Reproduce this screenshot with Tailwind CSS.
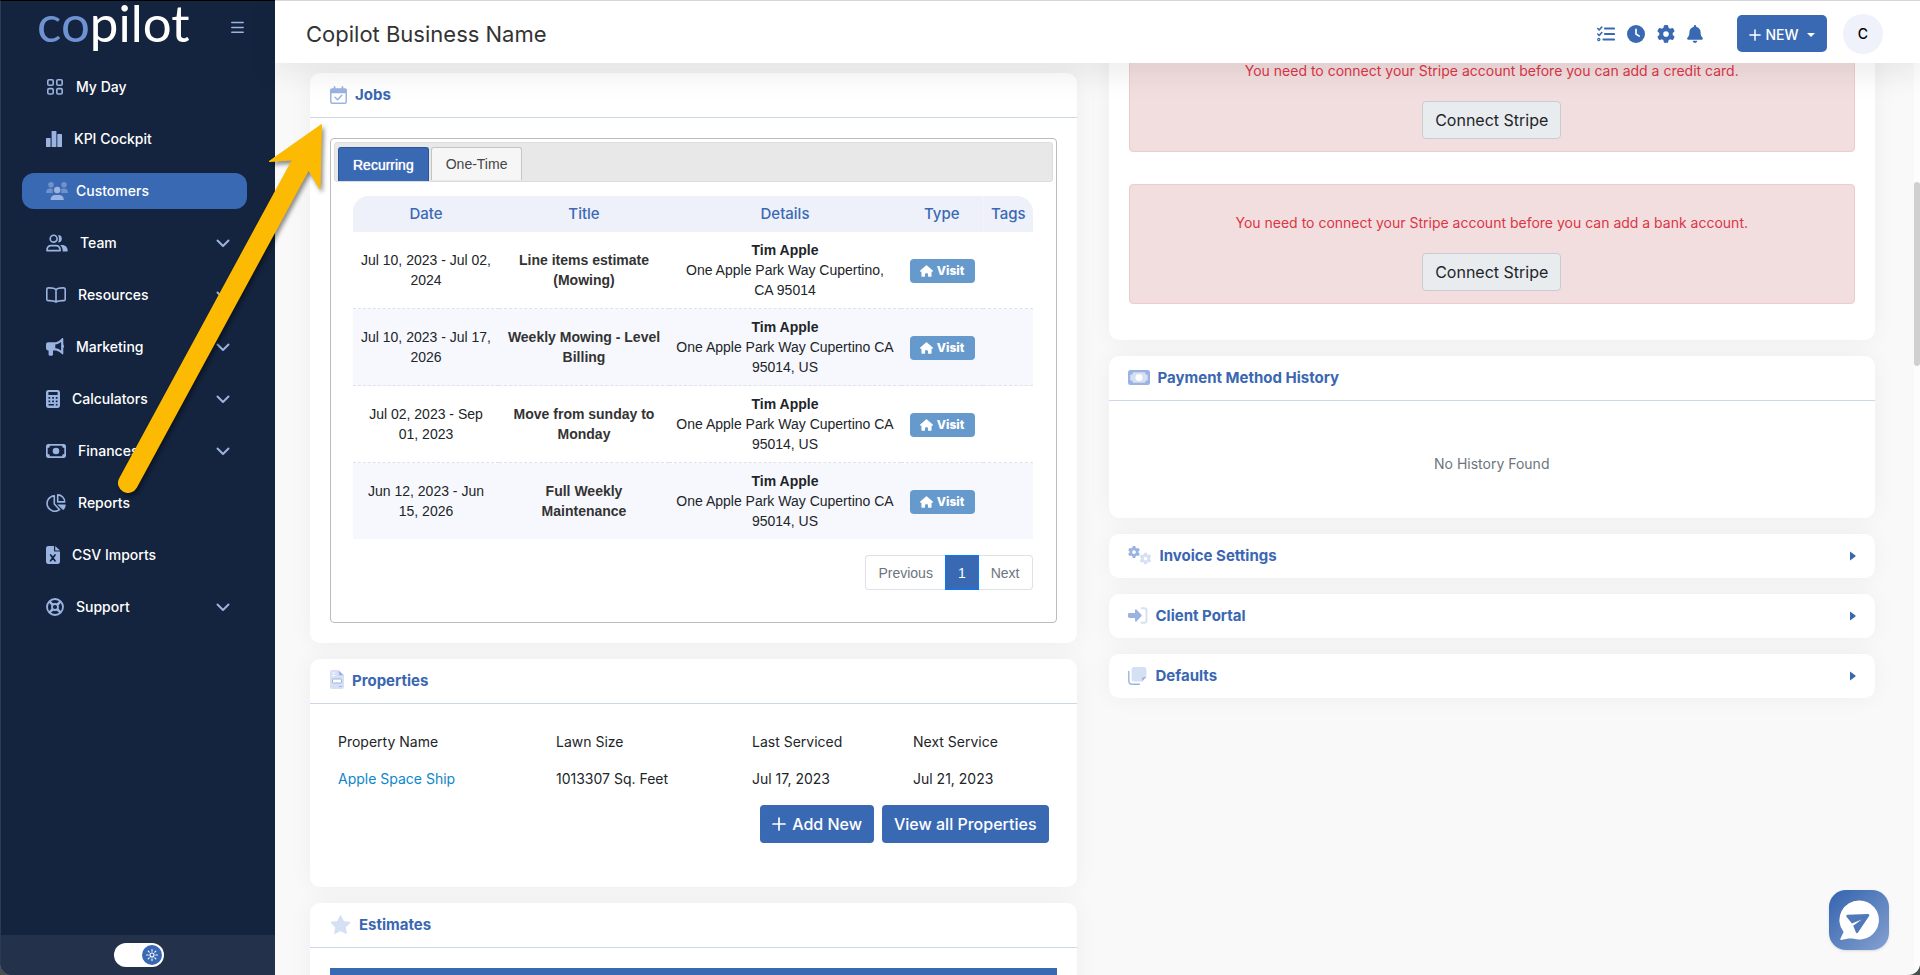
<!DOCTYPE html>
<html lang="en">
	<head>
		<meta charset="UTF-8" />
		<meta name="viewport" content="width=device-width, initial-scale=1.0" />
		<title>Copilot CRM - Customer</title>
		<script src="https://cdn.jsdelivr.net/npm/@tailwindcss/browser@4"></script>
	</head>
	<body class="bg-[#46504f] font-['Inter',sans-serif] text-sm text-[#212529]">
		<!-- Shared icons -->
		<svg class="hidden">
			<symbol id="chevron" viewBox="0 0 14 9">
				<path d="M1.5 1.5 7 7l5.5-5.5" fill="none" stroke="currentColor" stroke-width="2" stroke-linecap="round" stroke-linejoin="round" />
			</symbol>
			<symbol id="plus" viewBox="0 0 14 14">
				<path d="M7 1v12M1 7h12" fill="none" stroke="currentColor" stroke-width="1.7" stroke-linecap="round" />
			</symbol>
			<symbol id="caret" viewBox="0 0 6 10"><path d="M0 .5v9L5.5 5.5v-1z" fill="currentColor" /></symbol>
			<symbol id="gear" viewBox="0 0 512 512">
				<path fill="currentColor" d="M495.9 166.6c3.2 8.7 .5 18.4-6.4 24.6l-43.3 39.4c1.1 8.3 1.7 16.8 1.7 25.4s-.6 17.1-1.7 25.4l43.3 39.4c6.9 6.2 9.6 15.9 6.4 24.6c-4.4 11.9-9.7 23.3-15.8 34.3l-4.7 8.1c-6.6 11-14 21.4-22.1 31.2c-5.9 7.2-15.7 9.6-24.5 6.8l-55.7-17.7c-13.4 10.3-28.2 18.9-44 25.4l-12.5 57.1c-2 9.1-9 16.3-18.2 17.8c-13.8 2.3-28 3.5-42.5 3.5s-28.7-1.2-42.5-3.5c-9.2-1.5-16.2-8.7-18.2-17.8l-12.5-57.1c-15.8-6.5-30.6-15.1-44-25.4L83.1 425.9c-8.8 2.8-18.6 .3-24.5-6.8c-8.1-9.8-15.5-20.2-22.1-31.2l-4.7-8.1c-6.1-11-11.4-22.4-15.8-34.3c-3.2-8.7-.5-18.4 6.4-24.6l43.3-39.4C64.6 273.1 64 264.6 64 256s.6-17.1 1.7-25.4L22.4 191.2c-6.9-6.2-9.6-15.9-6.4-24.6c4.4-11.9 9.7-23.3 15.8-34.3l4.7-8.1c6.6-11 14-21.4 22.1-31.2c5.9-7.2 15.7-9.6 24.5-6.8l55.7 17.7c13.4-10.3 28.2-18.9 44-25.4l12.5-57.1c2-9.1 9-16.3 18.2-17.8C227.3 1.2 241.5 0 256 0s28.7 1.2 42.5 3.5c9.2 1.5 16.2 8.7 18.2 17.8l12.5 57.1c15.8 6.5 30.6 15.1 44 25.4l55.7-17.7c8.8-2.8 18.6-.3 24.5 6.8c8.1 9.8 15.5 20.2 22.1 31.2l4.7 8.1c6.1 11 11.4 22.4 15.8 34.3zM256 336a80 80 0 1 0 0-160 80 80 0 1 0 0 160z" />
			</symbol>
			<symbol id="house" viewBox="0 0 576 512">
				<path fill="currentColor" d="M575.8 255.5c0 18-15 32.1-32 32.1l-32 0 .7 160.2c0 2.7-.2 5.4-.5 8.1l0 16.2c0 22.1-17.9 40-40 40l-80 0c-22.1 0-40-17.9-40-40l0-88c0-17.7-14.3-32-32-32l-64 0c-17.7 0-32 14.3-32 32l0 88c0 22.1-17.9 40-40 40l-80 0c-22.1 0-40-17.9-40-40l0-184.5-32 0c-18 0-32-14-32-32.1c0-9 3-17 10-24L266.4 8c7-7 15-8 22-8s15 2 21 7L564.8 231.500c8 7 12 15 11 24z" />
			</symbol>
		</svg>

		<div class="relative flex h-screen overflow-hidden rounded-b-xl bg-[#f9f9f9]">
			<!-- Sidebar -->
			<aside class="flex w-[275px] shrink-0 flex-col border-t border-l border-t-black border-l-[#2c3b54] bg-[#14243e] font-medium text-white">
				<div class="flex h-[52px] items-center justify-between pr-[31px] pl-9">
					<a href="#" class="pb-2.5 font-['Lato',sans-serif] text-[51px] leading-none font-normal"><span class="text-[#6f92d2]">co</span>pilot</a>
					<button aria-label="Collapse menu" class="text-[#9bb3e0]">
						<svg class="h-3 w-[13px]" viewBox="0 0 13 12" fill="none" stroke="currentColor" stroke-width="1.5" stroke-linecap="round"><path d="M.8 1.5h11.4M.8 6.5h11.4M.8 11.2h11.4" /></svg>
					</button>
				</div>
				<nav class="mt-4 flex flex-1 flex-col gap-4 pr-7 pl-[21px]">
					<a href="#" class="flex h-9 items-center gap-3 rounded-xl px-6">
						<svg class="h-4 w-[18px] text-[#9bb3e0]" viewBox="0 0 18 16" fill="none" stroke="currentColor" stroke-width="1.6"><rect x="1.8" y=".8" width="5.4" height="5.4" rx="1.3" /><rect x="10.8" y=".8" width="5.4" height="5.4" rx="1.3" /><rect x="1.8" y="9.6" width="5.4" height="5.4" rx="1.3" /><rect x="10.8" y="9.6" width="5.4" height="5.4" rx="1.3" /></svg>
						<span>My Day</span>
					</a>
					<a href="#" class="flex h-9 items-center gap-3 rounded-xl px-6">
						<svg class="h-4 w-4 text-[#9bb3e0]" viewBox="0 0 16 16" fill="currentColor"><rect y="7" width="4.6" height="9" rx=".6" /><rect x="5.6" width="4.8" height="16" rx=".6" /><rect x="11.3" y="3" width="4.7" height="13" rx=".6" /></svg>
						<span>KPI Cockpit</span>
					</a>
					<a href="#" class="flex h-9 items-center gap-2 rounded-xl bg-[#3a69b4] px-6">
						<svg class="h-[18px] w-[22px] text-[#9bb3e0]" viewBox="0 0 22 18" fill="currentColor"><g opacity=".55"><circle cx="5" cy="2.8" r="2.8" /><circle cx="18" cy="2.8" r="2.8" /><path d="M0 11c0-3 1.5-4.4 4-4.4 1.5 0 2.3.3 3 1-.6 1.3-.5 2.3-.2 3.4zM22 11c0-3-1.5-4.4-4-4.4-1.5 0-2.3.3-3 1 .6 1.3.5 2.3.2 3.4z" /></g><circle cx="11.2" cy="8" r="3.2" /><path d="M4.6 18c0-3.4 2-5 4.6-5h4c2.6 0 4.6 1.6 4.6 5z" /></svg>
						<span>Customers</span>
					</a>
					<a href="#" class="flex h-9 items-center gap-3 rounded-xl px-6">
						<svg class="h-[18px] w-[22px] text-[#9bb3e0]" viewBox="0 0 23 18" fill="currentColor"><circle cx="8" cy="4.5" r="3.6" fill="none" stroke="currentColor" stroke-width="1.7" /><path d="M1 17c0-3.5 2-5.3 4.6-5.3h4.6c2.6 0 4.6 1.8 4.6 5.3z" fill="none" stroke="currentColor" stroke-width="1.7" stroke-linejoin="round" /><path d="M12.6.6a3.9 3.9 0 1 1 0 7.8c1.2-2.3 1.2-5.5 0-7.8zM14.7 11h2c3.8 0 6 2.3 6 6.2 0 .4-.3.7-.7.7h-4.6c.2-3-.8-5.3-2.7-6.9z" /></svg>
						<span>Team</span>
						<svg class="mr-[-7px] ml-auto h-[9px] w-[14px] text-[#9bb3e0]"><use href="#chevron" /></svg>
					</a>
					<a href="#" class="flex h-9 items-center gap-3 rounded-xl px-6">
						<svg class="h-4 w-5 text-[#9bb3e0]" viewBox="0 0 20 16" fill="none" stroke="currentColor" stroke-width="1.6" stroke-linejoin="round"><path d="M10 2.3C8.5 1.2 5.5.8 2.3.9c-.9 0-1.5.6-1.5 1.4v9.900c0 .8.6 1.4 1.5 1.4 3.2-.1 6.2.3 7.7 1.4 1.5-1.1 4.5-1.5 7.7-1.4.9 0 1.5-.6 1.5-1.4V2.3c0-.8-.6-1.4-1.5-1.4-3.2-.1-6.2.3-7.7 1.4zM10 2.3V15" /></svg>
						<span>Resources</span>
						<svg class="mr-[-7px] ml-auto h-[9px] w-[14px] text-[#9bb3e0]"><use href="#chevron" /></svg>
					</a>
					<a href="#" class="flex h-9 items-center gap-3 rounded-xl px-6">
						<svg class="h-[18px] w-[18px] text-[#9bb3e0]" viewBox="0 0 18 18" fill="currentColor"><path fill-rule="evenodd" d="M16 .3c.6-.6 1.3-.2 1.3.6v5.6c.6.4.7 1 .7 1.7s-.1 1.3-.7 1.7v5.6c0 .8-.7 1.2-1.3.6l-2.5-2c-1.4-1.1-3-1.7-4.8-1.7H7v4.2c0 .7-.4 1.1-1.1 1.1H3.7c-.7 0-1.1-.4-1.1-1.1v-4.2H2.2C1 12.400 0 11.400 0 10.200V6.4c0-1.3 1-2.2 2.2-2.2h6.5c1.8 0 3.4-.6 4.8-1.8zM15.1 4l-.3.3c-1.6 1.2-3.5 2-5.5 2.1v3.9c2 .1 3.9.8 5.5 2.1l.3.2z" /></svg>
						<span>Marketing</span>
						<svg class="mr-[-7px] ml-auto h-[9px] w-[14px] text-[#9bb3e0]"><use href="#chevron" /></svg>
					</a>
					<a href="#" class="flex h-9 items-center gap-3 rounded-xl px-6">
						<svg class="h-[18px] w-[14px] text-[#9bb3e0]" viewBox="0 0 14 18" fill="currentColor"><path fill-rule="evenodd" d="M2.2 0h9.6C13 0 14 1 14 2.2v13.6c0 1.2-1 2.2-2.2 2.2H2.2C1 18 0 17 0 15.8V2.2C0 1 1 0 2.2 0zM2.4 2v3h9.2V2zM2.5 7v1.7h1.7V7zM6.2 7v1.7h1.7V7zM9.8 7v1.7h1.7V7zM2.5 10.5v1.7h1.7v-1.7zM6.2 10.5v1.7h1.7v-1.7zM9.8 10.5v1.7h1.7v-1.7zM2.5 14v1.5h5.4V14zM9.8 14v1.5h1.7V14z" /></svg>
						<span>Calculators</span>
						<svg class="mr-[-7px] ml-auto h-[9px] w-[14px] text-[#9bb3e0]"><use href="#chevron" /></svg>
					</a>
					<a href="#" class="flex h-9 items-center gap-3 rounded-xl px-6">
						<svg class="h-[14px] w-5 text-[#9bb3e0]" viewBox="0 0 20 14" fill="currentColor"><path fill-rule="evenodd" d="M2.2 0h15.6C19 0 20 1 20 2.2v9.6c0 1.2-1 2.2-2.2 2.2H2.2C1 14 0 13 0 11.8V2.2C0 1 1 0 2.2 0zM4 1.7A2.3 2.3 0 0 1 1.7 4v6A2.3 2.3 0 0 1 4 12.3h12a2.3 2.3 0 0 1 2.3-2.3V4A2.3 2.3 0 0 1 16 1.7z" /><circle cx="10" cy="7" r="3.3" /></svg>
						<span>Finances</span>
						<svg class="mr-[-7px] ml-auto h-[9px] w-[14px] text-[#9bb3e0]"><use href="#chevron" /></svg>
					</a>
					<a href="#" class="flex h-9 items-center gap-3 rounded-xl px-6">
						<svg class="h-[18px] w-5 text-[#9bb3e0]" viewBox="0 0 20 18"><g fill="none" stroke="currentColor" stroke-width="1.6" stroke-linejoin="round"><path d="M8.3 1.7a7.8 7.8 0 1 0 5.3 14L8.3 10z" /><path d="M11.7.9v7h7a7 7 0 0 0-7-7z" /></g><path d="M11.2 10.5h8.1c.3 0 .5.3.5.6a7.6 7.6 0 0 1-2.2 4.7c-.2.2-.6.2-.8 0z" fill="currentColor" /></svg>
						<span>Reports</span>
					</a>
					<a href="#" class="flex h-9 items-center gap-3 rounded-xl px-6">
						<svg class="h-[18px] w-[14px] text-[#9bb3e0]" viewBox="0 0 14 18"><path d="M2.2 0H8v4.5c0 .6.4 1.1 1.1 1.1H14v10.2c0 1.2-1 2.2-2.2 2.2H2.2C1 18 0 17 0 15.8V2.2C0 1 1 0 2.2 0zM9.2 0 14 4.5H9.2z" fill="currentColor" /><path d="m4.6 9 4.4 5.8M9 9l-4.4 5.8" stroke="#14243e" stroke-width="1.7" stroke-linecap="round" /></svg>
						<span>CSV Imports</span>
					</a>
					<a href="#" class="flex h-9 items-center gap-3 rounded-xl px-6">
						<svg class="h-[18px] w-[18px] text-[#9bb3e0]" viewBox="0 0 18 18" fill="none" stroke="currentColor" stroke-width="1.8"><circle cx="9" cy="9" r="8" /><circle cx="9" cy="9" r="3" /><path d="m3.3 3.3 3.5 3.5M14.7 3.3l-3.5 3.5M3.3 14.7l3.5-3.5M14.7 14.7l-3.5-3.5" stroke-width="2.6" /></svg>
						<span>Support</span>
						<svg class="mr-[-7px] ml-auto h-[9px] w-[14px] text-[#9bb3e0]"><use href="#chevron" /></svg>
					</a>
				</nav>
				<div class="flex h-10 items-center justify-center bg-[#23314a] pl-0.5">
					<label class="relative block h-6 w-[50px]">
						<input type="checkbox" checked aria-label="Light mode" class="block h-6 w-[50px] cursor-pointer appearance-none rounded-full bg-white" />
						<span class="pointer-events-none absolute top-0.5 right-0.5 flex size-5 items-center justify-center rounded-full bg-[#3a69b4]">
							<svg class="size-3" viewBox="0 0 12 12" fill="none" stroke="white" stroke-width="1.1" stroke-linecap="round"><circle cx="6" cy="6" r="2" /><path d="M6 .6v1.6M6 9.8v1.6M.6 6h1.6M9.8 6h1.6M2.2 2.2l1 1M8.8 8.8l1 1M2.2 9.8l1-1M8.8 3.2l1-1" /></svg>
						</span>
					</label>
				</div>
			</aside>

			<div class="flex min-w-0 flex-1 flex-col">
				<!-- Top bar -->
				<header class="relative z-10 flex h-[63px] shrink-0 items-center border-t border-[#d6d6d6] bg-white pt-[3px] pr-[37px] pl-[31px] shadow-[0_10px_30px_rgba(40,35,60,0.09)]">
					<h1 class="pt-0.5 text-[22px] text-[#333]">Copilot Business Name</h1>
					<div class="ml-auto flex items-center gap-3 text-[#3a69b4]">
						<button aria-label="Tasks"><svg class="block h-4 w-[18px]" viewBox="0 0 18 16" fill="none" stroke="currentColor" stroke-width="2.2" stroke-linecap="round"><path d="M8 2.5h9M8 8h9M6.5 13.5H17" /><path d="M.8 2.5 2.2 4 4.8 1M.8 8l1.4 1.5L4.8 6.5" stroke-width="1.6" stroke-linejoin="round" /><circle cx="1.8" cy="13.5" r=".6" /></svg></button>
						<button aria-label="Time"><svg class="block size-[18px]" viewBox="0 0 18 18"><circle cx="9" cy="9" r="9" fill="currentColor" /><path d="M9 4.3V9l3.2 2.1" fill="none" stroke="white" stroke-width="1.7" stroke-linecap="round" /></svg></button>
						<button aria-label="Settings"><svg class="block size-[18px]"><use href="#gear" /></svg></button>
						<button aria-label="Notifications"><svg class="block h-[18px] w-4" viewBox="0 0 448 512"><path fill="currentColor" d="M224 0c-17.7 0-32 14.3-32 32l0 19.2C119 66 64 130.6 64 208l0 18.8c0 47-17.3 92.4-48.5 127.6l-7.4 8.3c-8.4 9.4-10.4 22.9-5.3 34.4S19.4 416 32 416l384 0c12.6 0 24-7.4 29.2-18.9s3.1-25-5.3-34.4l-7.4-8.3C401.3 319.2 384 273.9 384 226.8l0-18.8c0-77.4-55-142-128-156.8L256 32c0-17.7-14.3-32-32-32zm45.3 493.3c12-12 18.7-28.3 18.7-45.3l-128 0c0 17 6.7 33.3 18.7 45.3s28.3 18.7 45.3 18.7s33.3-6.7 45.3-18.7z" /></svg></button>
					</div>
					<button class="ml-[34px] flex h-[37px] w-[90px] items-center justify-center rounded-[5px] bg-[#3a69b4] pt-0.5 font-medium text-white">
						<svg class="mr-1 size-3"><use href="#plus" /></svg>NEW
						<svg class="ml-2 h-1 w-2" viewBox="0 0 8 4"><path d="M0 0h8L4 4z" fill="currentColor" /></svg>
					</button>
					<button class="ml-4 size-10 rounded-full bg-[#eff2fa] font-medium text-black">C</button>
				</header>

				<div class="flex min-h-0 flex-1">
					<main class="grid min-w-0 flex-1 grid-cols-2 gap-8 overflow-hidden pt-2.5 pr-[39px] pl-[35px]">
						<!-- Left column -->
						<div class="flex flex-col gap-4">
							<section class="rounded-[10px] bg-white shadow-[0_0_24px_rgba(0,0,0,0.05)]">
								<h2 class="flex h-[45px] items-center gap-2 border-b border-[#ccd7ea] px-5 text-[15px] font-bold text-[#3a67b1]">
									<svg class="h-[18px] w-[17px]" viewBox="0 0 17 18"><path d="M.8 6.5h15.4v9.2c0 .9-.6 1.5-1.5 1.5H2.3c-.9 0-1.5-.6-1.5-1.5zM5 11.2l2.6 2.5 4.2-4.5" fill="none" stroke="#9bb3e0" stroke-width="1.5" stroke-linecap="round" stroke-linejoin="round" /><path d="M3.7.7c0-.9 1.7-.9 1.7 0v1.5h6.2V.7c0-.9 1.7-.9 1.7 0v1.5h1.6c1.2 0 2.1.9 2.1 2.1v2.5H0V4.3C0 3.1.9 2.2 2.1 2.2h1.6z" fill="#9bb3e0" /></svg>
									Jobs
								</h2>
								<div class="p-5">
									<div class="rounded border border-[#bcbcbc] p-[3px] pb-8 font-['Liberation_Sans',sans-serif]">
										<div role="tablist" class="flex h-10 items-end gap-0.5 rounded-[3px] border border-[#ddd] bg-[#e8e8e8] px-[3px]">
											<button role="tab" aria-selected="true" class="h-[34px] rounded-t-[3px] border border-b-0 border-[#2a5597] bg-[#3a69b4] px-3.5 text-white [text-shadow:0_0_1px_white]">Recurring</button>
											<button role="tab" aria-selected="false" class="mb-px h-[33px] rounded-t-[3px] border border-b-0 border-[#c5c5c5] bg-[#f6f6f6] px-3.5 text-[#454545]">One-Time</button>
										</div>
										<div class="pt-3.5 pr-5 pl-[19px]">
											<table class="w-full table-fixed text-center leading-5">
												<colgroup>
													<col class="w-[146px]" />
													<col class="w-[170px]" />
													<col class="w-[232px]" />
													<col class="w-[82px]" />
													<col class="w-[50px]" />
												</colgroup>
												<thead class="bg-[#eef1fa] font-['Inter',sans-serif] text-[15px] text-[#3a69b4]">
													<tr class="h-9">
														<th class="rounded-tl-2xl bg-[#eef1fa] font-medium">Date</th>
														<th class="bg-[#eef1fa] font-medium">Title</th>
														<th class="bg-[#eef1fa] font-medium">Details</th>
														<th class="border-r border-[#f3f5fb] font-medium">Type</th>
														<th class="rounded-tr-2xl font-medium">Tags</th>
													</tr>
												</thead>
												<tbody>
													<tr class="border-b border-dashed border-[#dee2ea]">
														<td class="px-1.5 py-2">Jul 10, 2023 - Jul 02, 2024</td>
														<td class="px-1.5 py-2 font-bold text-[#333]">Line items estimate (Mowing)</td>
														<td class="px-1.5 py-2"><b>Tim Apple</b><br />One Apple Park Way Cupertino, CA 95014</td>
														<td class="pt-0.5"><button class="inline-flex h-6 w-[65px] items-center justify-center gap-1 rounded bg-[#6699cc] align-middle font-['Inter',sans-serif] text-xs font-extrabold text-white"><svg class="h-3 w-[13px]"><use href="#house" /></svg>Visit</button></td>
														<td></td>
													</tr>
													<tr class="border-b border-dashed border-[#dee2ea] bg-[#f7f8fd]">
														<td class="px-1.5 py-2">Jul 10, 2023 - Jul 17, 2026</td>
														<td class="px-1.5 py-2 font-bold text-[#333]">Weekly Mowing - Level Billing</td>
														<td class="px-1.5 py-2"><b>Tim Apple</b><br />One Apple Park Way Cupertino CA 95014, US</td>
														<td class="pt-0.5"><button class="inline-flex h-6 w-[65px] items-center justify-center gap-1 rounded bg-[#6699cc] align-middle font-['Inter',sans-serif] text-xs font-extrabold text-white"><svg class="h-3 w-[13px]"><use href="#house" /></svg>Visit</button></td>
														<td></td>
													</tr>
													<tr class="border-b border-dashed border-[#dee2ea]">
														<td class="px-1.5 py-2">Jul 02, 2023 - Sep 01, 2023</td>
														<td class="px-1.5 py-2 font-bold text-[#333]">Move from sunday to Monday</td>
														<td class="px-1.5 py-2"><b>Tim Apple</b><br />One Apple Park Way Cupertino CA 95014, US</td>
														<td class="pt-0.5"><button class="inline-flex h-6 w-[65px] items-center justify-center gap-1 rounded bg-[#6699cc] align-middle font-['Inter',sans-serif] text-xs font-extrabold text-white"><svg class="h-3 w-[13px]"><use href="#house" /></svg>Visit</button></td>
														<td></td>
													</tr>
													<tr class="bg-[#f7f8fd]">
														<td class="px-1.5 py-2">Jun 12, 2023 - Jun 15, 2026</td>
														<td class="px-1.5 py-2 font-bold text-[#333]">Full Weekly Maintenance</td>
														<td class="px-1.5 py-2"><b>Tim Apple</b><br />One Apple Park Way Cupertino CA 95014, US</td>
														<td class="pt-0.5"><button class="inline-flex h-6 w-[65px] items-center justify-center gap-1 rounded bg-[#6699cc] align-middle font-['Inter',sans-serif] text-xs font-extrabold text-white"><svg class="h-3 w-[13px]"><use href="#house" /></svg>Visit</button></td>
														<td></td>
													</tr>
												</tbody>
											</table>
											<div class="mt-4 flex h-[35px] justify-end text-[#6c757d]">
												<button class="rounded-l border border-r-0 border-[#dee2e6] px-3">Previous</button>
												<button class="border border-[#007bff] bg-[#3a69b4] px-3 text-white">1</button>
												<button class="rounded-r border border-l-0 border-[#dee2e6] px-3">Next</button>
											</div>
										</div>
									</div>
								</div>
							</section>

							<section class="rounded-[10px] bg-white shadow-[0_0_24px_rgba(0,0,0,0.05)]">
								<h2 class="flex h-[45px] items-center gap-2 border-b border-[#ccd7ea] px-5 text-[15px] font-bold text-[#3a67b1]">
									<svg class="mb-1 h-[19px] w-[14px]" viewBox="0 0 14 19"><path d="M2 0h6v5.5h6V17c0 1.2-.9 2-2 2H2c-1.200 0-2-.9-2-2V2C0 .9.9 0 2 0z" fill="#d6e0f4" /><path d="m8.5 0 5.5 5.5H8.5zM9 16h2.8v.9H9z" fill="#9bb3e0" /><rect x="2.5" y="9" width="9" height="4" rx=".8" fill="white" stroke="#9bb3e0" /><path d="M2.2 3h3M2.2 5.5h3" stroke="white" /></svg>
									Properties
								</h2>
								<div class="px-7 pt-[19px] pb-11">
									<table class="w-full table-fixed text-left">
										<colgroup>
											<col class="w-[218px]" />
											<col class="w-[196px]" />
											<col class="w-[161px]" />
											<col class="w-[136px]" />
										</colgroup>
										<thead>
											<tr class="h-[37px]">
												<th class="font-normal">Property Name</th>
												<th class="font-normal">Lawn Size</th>
												<th class="font-normal">Last Serviced</th>
												<th class="font-normal">Next Service</th>
											</tr>
										</thead>
										<tbody>
											<tr class="h-[37px]">
												<td><a href="#" class="text-[#0d86cc]">Apple Space Ship</a></td>
												<td>1013307 Sq. Feet</td>
												<td>Jul 17, 2023</td>
												<td>Jul 21, 2023</td>
											</tr>
										</tbody>
									</table>
									<div class="mt-2 flex justify-end gap-2 text-base font-medium text-white">
										<button class="flex h-[38px] items-center gap-1.5 rounded bg-[#3a69b4] px-3"><svg class="size-[14px]"><use href="#plus" /></svg>Add New</button>
										<button class="h-[38px] rounded bg-[#3a69b4] px-3">View all Properties</button>
									</div>
								</div>
							</section>

							<section class="rounded-[10px] bg-white shadow-[0_0_24px_rgba(0,0,0,0.05)]">
								<h2 class="flex h-[45px] items-center gap-2 border-b border-[#ccd7ea] px-5 text-[15px] font-bold text-[#3a67b1]">
									<svg class="mb-0.5 h-[19px] w-[21px]" viewBox="0 0 21 19"><path d="m10.5 1 2.8 5.7 6.2.9-4.5 4.4 1.1 6.2-5.6-2.900-5.600 2.900L6 12 1.500 7.600l6.200-.9z" fill="#d6e0f4" stroke="#d6e0f4" stroke-width="1.5" stroke-linejoin="round" /></svg>
									Estimates
								</h2>
								<div class="p-5">
									<div class="h-10 bg-[#3a69b4]"></div>
								</div>
							</section>
						</div>

						<!-- Right column, scrolled past the top of its first card -->
						<div class="-mt-[41px] flex flex-col gap-4">
							<section class="rounded-b-[10px] bg-white px-5 pb-9 text-center shadow-[0_0_24px_rgba(0,0,0,0.05)]">
								<div class="h-[120px] rounded border border-[#ebccd1] bg-[#f2dede] pt-7">
									<p class="text-[#dc3545]">You need to connect your Stripe account before you can add a credit card.</p>
									<button class="mt-5 h-[38px] rounded border border-[#c9ccd0] bg-[#e9ecef] px-3 text-base">Connect Stripe</button>
								</div>
								<div class="mt-8 h-[120px] rounded border border-[#ebccd1] bg-[#f2dede] pt-7">
									<p class="text-[#dc3545]">You need to connect your Stripe account before you can add a bank account.</p>
									<button class="mt-5 h-[38px] rounded border border-[#c9ccd0] bg-[#e9ecef] px-3 text-base">Connect Stripe</button>
								</div>
							</section>

							<section class="rounded-[10px] bg-white shadow-[0_0_24px_rgba(0,0,0,0.05)]">
								<h2 class="flex h-[45px] items-center gap-2 border-b border-[#ccd7ea] px-[19px] text-[15px] font-bold text-[#3a67b1]">
									<svg class="mb-0.5 h-[15px] w-[22px]" viewBox="0 0 22 15"><rect width="22" height="15" rx="2.5" fill="#9bb3e0" /><path d="M5 2.2h12a2.5 2.5 0 0 0 2.7 2.5v5.6a2.5 2.5 0 0 0-2.7 2.5H5a2.5 2.5 0 0 0-2.7-2.5V4.7A2.5 2.5 0 0 0 5 2.2z" fill="#d6e0f4" /><circle cx="11" cy="7.5" r="3.5" fill="white" /></svg>
									Payment Method History
								</h2>
								<p class="pt-[53px] pb-11 text-center text-[#6c757d]">No History Found</p>
							</section>

							<section class="rounded-[10px] bg-white shadow-[0_0_24px_rgba(0,0,0,0.05)]">
								<button class="flex h-11 w-full items-center gap-2 px-[19px] text-[15px] font-bold text-[#3a67b1]">
									<svg class="mb-0.5 h-[19px] w-6" viewBox="0 0 24 19"><use href="#gear" width="12" height="12" class="text-[#9bb3e0]" /><use href="#gear" x="11.5" y="6.5" width="12" height="12" class="text-[#d6e0f4]" /></svg>
									Invoice Settings
									<svg class="ml-auto h-2.5 w-1.5"><use href="#caret" /></svg>
								</button>
							</section>

							<section class="rounded-[10px] bg-white shadow-[0_0_24px_rgba(0,0,0,0.05)]">
								<button class="flex h-11 w-full items-center gap-2 px-[19px] text-[15px] font-bold text-[#3a67b1]">
									<svg class="mb-0.5 h-[17px] w-5" viewBox="0 0 20 17"><path d="M13.5 1.2h2.8c1.3 0 2.2.9 2.2 2.2v10.2c0 1.3-.9 2.2-2.2 2.2h-2.8" fill="none" stroke="#d6e0f4" stroke-width="1.9" stroke-linecap="round" /><path d="M7 3.2c0-.8.8-1.1 1.4-.6l5 5.2c.4.4.4 1 0 1.4l-5 5.2c-.6.5-1.4.2-1.4-.6v-2.900H1.4C.6 10.900 0 10.400 0 9.600V7.400C0 6.600.6 6.100 1.400 6.100H7z" fill="#9bb3e0" /></svg>
									Client Portal
									<svg class="ml-auto h-2.5 w-1.5"><use href="#caret" /></svg>
								</button>
							</section>

							<section class="rounded-[10px] bg-white shadow-[0_0_24px_rgba(0,0,0,0.05)]">
								<button class="flex h-11 w-full items-center gap-2 px-[19px] text-[15px] font-bold text-[#3a67b1]">
									<svg class="h-[18px] w-5" viewBox="0 0 20 18"><path d="M.8 4.5v9.2c0 2 1.5 3.5 3.5 3.5h7" fill="none" stroke="#9bb3e0" stroke-width="1.4" stroke-linecap="round" /><path d="M6 0h10c1.4 0 2.4 1 2.4 2.4V10h-2.6c-1.100 0-1.800.7-1.800 1.800v2.600H6c-1.400 0-2.400-1-2.400-2.400V2.400C3.600 1 4.600 0 6 0z" fill="#d6e0f4" /><path d="M14 14.4v-2.600c0-1.100.7-1.800 1.800-1.800h2.600z" fill="#9bb3e0" /></svg>
									Defaults
									<svg class="ml-auto h-2.5 w-1.5"><use href="#caret" /></svg>
								</button>
							</section>
						</div>
					</main>

					<!-- Scrollbar -->
					<div class="w-1.5 shrink-0 bg-[#fdfdfd] pt-[119px]">
						<div class="h-[184px] rounded-full bg-[#d0d0d0]"></div>
					</div>
				</div>
			</div>

			<!-- Chat launcher -->
			<button aria-label="Open chat" class="absolute right-[31px] bottom-[25px] flex size-[60px] items-center justify-center rounded-[17px] bg-linear-to-br from-[#3363ae] to-[#85a1d0] shadow-sm">
				<svg class="size-10" viewBox="0 0 40 40"><path d="M20.5.5a19.5 19.5 0 1 1-5.6 38.2c-4.500-.6-8.500.3-12.700 1.300-.8.1-1.100-.6-.8-1.200l3.200-6.700A19.500 19.500 0 0 1 20.500.5z" fill="white" /><path d="M8.400 14.800 29 13.900c1.200 0 1.800 1 1.100 2L19 32.600c-.6.9-1.800.7-2.100-.3l-2.700-6.500 8.500-6.400-9.800 4-5.200-6.400c-.7-.9-.4-2.100.7-2.200z" fill="#5179b9" /></svg>
			</button>

			<!-- Annotation arrow -->
			<svg class="pointer-events-none absolute top-0 left-0 z-20 h-[520px] w-[350px] drop-shadow-[2px_3px_2px_rgba(0,0,0,0.45)]" viewBox="0 0 350 520" fill="#fcba03">
				<path d="M128 483 301 164" stroke="#fcba03" stroke-width="20" stroke-linecap="round" fill="none" />
				<path d="M321.5 124.500 320 189 308.500 170 291.500 160 269 161.500z" stroke="#fcba03" stroke-linejoin="round" />
			</svg>
		</div>
	</body>
</html>
